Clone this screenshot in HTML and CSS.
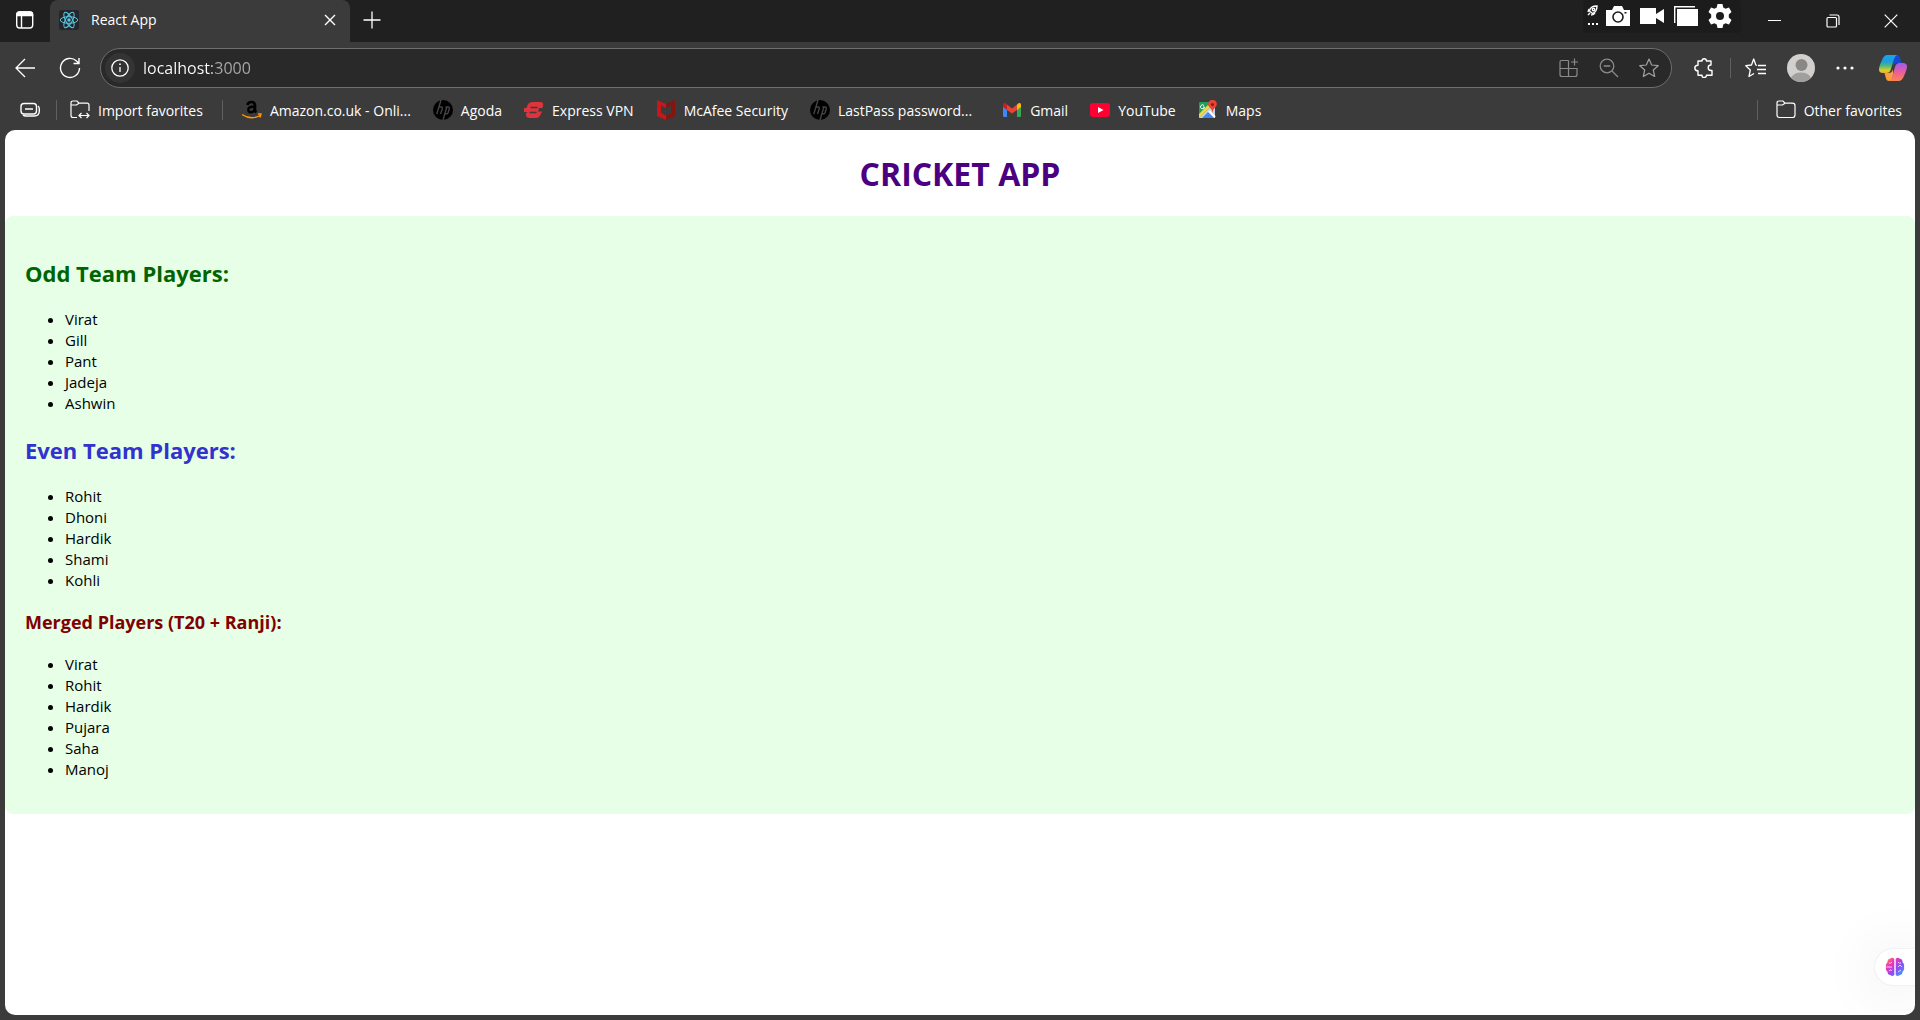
FILE: index.html
```html
<!DOCTYPE html>
<html lang="en">
<head>
<meta charset="utf-8">
<title>React App</title>
<link rel="stylesheet" href="styles.css">
</head>
<body>
<header class="browser">
  <div class="tabstrip">
    <button class="icon-btn tab-actions" aria-label="Tab actions"><svg width="20" height="20" viewBox="0 0 20 20" fill="none" stroke="#fff" stroke-width="1.4"><rect x="1.7" y="2" width="16" height="16" rx="3"/><path d="M6.5 6v12"/><path d="M2 5.5V4.5Q2 2 4.500 2h10.500Q17.500 2 17.500 4.500v1z" fill="#fff"/></svg></button>
    <div class="tab">
      <svg class="favicon" width="20" height="20" viewBox="0 0 20 20"><rect width="20" height="20" rx="2" fill="#23272b"/><g fill="none" stroke="#5bc8e4" stroke-width="1"><ellipse cx="10" cy="10" rx="8.700" ry="3.300"/><ellipse cx="10" cy="10" rx="8.700" ry="3.300" transform="rotate(60 10 10)"/><ellipse cx="10" cy="10" rx="8.700" ry="3.300" transform="rotate(120 10 10)"/></g><circle cx="10" cy="10" r="1.700" fill="#5bc8e4"/></svg>
      <span class="tab-title">React App</span>
      <button class="icon-btn tab-close" aria-label="Close tab"><svg width="12" height="12" viewBox="0 0 12 12" stroke="#fff" stroke-width="1.400"><path d="M1 1l10 10M11 1L1 11"/></svg></button>
    </div>
    <button class="icon-btn new-tab" aria-label="New tab"><svg width="20" height="20" viewBox="0 0 20 20" stroke="#fff" stroke-width="1.300"><path d="M10 1.500v17M1.500 10h17"/></svg></button>
    <div class="recorder">
      <button class="icon-btn recorder-menu" aria-label="Recorder menu"><svg width="12" height="22" viewBox="0 0 12 22"><g fill="none" stroke="#fff" stroke-width="1.400"><path d="M2.500 6Q3 1 10 1q0 6-4.500 7.500z"/><circle cx="6.500" cy="4.500" r="1.200"/><path d="M1 10l2-2M2 4L1 7M4 10q3 0 4-2"/></g><path d="M1 18h2v2H1zM5 18h2v2H5zM9 18h2v2H9z" fill="#fff"/></svg></button>
      <button class="icon-btn" aria-label="Take screenshot"><svg width="24" height="20" viewBox="0 0 24 20"><path d="M0 4h6l2-4h8l2 4h6v16H0z" fill="#fff"/><circle cx="12" cy="11" r="5" fill="none" stroke="#1c1c1c" stroke-width="1.600"/><path d="M18.500 6h2v1.500h-2z" fill="#1c1c1c"/></svg></button>
      <button class="icon-btn" aria-label="Record video"><svg width="24" height="20" viewBox="0 0 24 20" fill="#fff"><path d="M0 2h16v16H0zM16 8l8-5v14l-8-5z"/></svg></button>
      <button class="icon-btn" aria-label="Record window"><svg width="24" height="20" viewBox="0 0 24 20" fill="#fff"><path d="M3 3h21v17H3z"/><path d="M.7 17V.7H21" fill="none" stroke="#fff" stroke-width="1.400"/></svg></button>
      <button class="icon-btn" aria-label="Recorder settings"><svg width="24" height="24" viewBox="0 0 24 24"><path fill="#fff" d="M9.500 0h5l.8 3.500 2.200 1.300 3.500-1.200 2.500 4.400-2.700 2.500v3l2.700 2.500-2.500 4.400-3.500-1.200-2.200 1.300-.8 3.500h-5l-.8-3.500-2.200-1.300L3 20.400.5 16l2.700-2.500v-3L.5 8 3 3.600l3.500 1.200 2.200-1.300z"/><circle cx="12" cy="12" r="4" fill="#1c1c1c"/></svg></button>
    </div>
    <div class="window-controls">
      <button class="icon-btn" aria-label="Minimize"><svg width="14" height="14" viewBox="0 0 14 14" stroke="#fff"><path d="M0 6.500h13"/></svg></button>
      <button class="icon-btn" aria-label="Restore"><svg width="14" height="14" viewBox="0 0 14 14" fill="none" stroke="#fff" stroke-width="1.200"><rect x="1" y="3.500" width="9.500" height="9.500" rx="1"/><path d="M3.500 1h7.500q2 0 2 2v8"/></svg></button>
      <button class="icon-btn" aria-label="Close"><svg width="14" height="14" viewBox="0 0 14 14" stroke="#fff" stroke-width="1.200"><path d="M.7.700l12.600 12.600M13.300.700L.7 13.300"/></svg></button>
    </div>
  </div>

  <div class="toolbar">
    <button class="icon-btn nav-btn" aria-label="Back"><svg width="20" height="20" viewBox="0 0 20 20" fill="none" stroke="#fff" stroke-width="1.300"><path d="M20 10H1M10 1L1 10l9 9"/></svg></button>
    <button class="icon-btn nav-btn" aria-label="Refresh"><svg width="22" height="22" viewBox="0 0 22 22" fill="none" stroke="#fff" stroke-width="1.400"><path d="M20.500 11A9.500 9.500 0 1 1 17.500 4L20 6.500M20 1v5.500h-5.500"/></svg></button>
    <div class="address">
      <button class="icon-btn site-info" aria-label="Site information"><svg width="18" height="18" viewBox="0 0 18 18" fill="none" stroke="#fff" stroke-width="1.300"><circle cx="9" cy="9" r="8.200"/><path d="M9 8v5"/><path d="M9 4.500v1.600" stroke-width="1.600"/></svg></button>
      <input class="url" type="text" aria-label="Address" value="localhost:3000" spellcheck="false">
      <div class="address-actions">
        <button class="icon-btn" aria-label="Install app"><svg width="20" height="20" viewBox="0 0 20 20" fill="none" stroke="#8a8a8a" stroke-width="1.200"><path d="M9.500 2.500h-7q-1.500 0-1.500 1.500v12.500q0 2 2 2h13q2 0 2-2v-6H1M9.500 2.500v16M15.500.500v7M12 4h7"/></svg></button>
        <button class="icon-btn" aria-label="Zoom out"><svg width="20" height="20" viewBox="0 0 20 20" fill="none" stroke="#8a8a8a" stroke-width="1.300"><circle cx="8" cy="8" r="6.800"/><path d="M4.700 8h6.600M13 13l6 6"/></svg></button>
        <button class="icon-btn" aria-label="Add to favorites"><svg width="20" height="20" viewBox="0 0 20 20" fill="none" stroke="#a0a0a0" stroke-width="1.200" stroke-linejoin="round"><path d="M10 1l2.700 6 6.500.700-4.900 4.300 1.400 6.500L10 15.200l-5.700 3.300 1.400-6.500L.8 7.700l6.500-.7z"/></svg></button>
      </div>
    </div>
    <div class="toolbar-end">
      <button class="icon-btn ext" aria-label="Extensions"><svg width="20" height="20" viewBox="0 0 20 20" fill="none" stroke="#fff" stroke-width="1.400" stroke-linejoin="round"><path d="M4 3h4q0-2.300 2.200-2.300T12.500 3H17v4q-2.800 0-2.800 2.700T17 12.500h1v4.700h-5.500q0 2.300-2.300 2.300T8 17.200H4v-4.400q-3.200 0-3.200-2.800T4 7.200z"/></svg></button>
      <span class="divider"></span>
      <button class="icon-btn fav" aria-label="Favorites"><svg width="21" height="20" viewBox="0 0 21 20" fill="none" stroke="#fff" stroke-width="1.300" stroke-linejoin="round"><path d="M12 7.500L10.800 7 8.700 1 6.500 7 .8 7.700l4.500 4.300L4 18.500l5-3M13 7.500h8M12 11.500h9M13 15.500h8"/></svg></button>
      <button class="icon-btn" aria-label="Profile"><svg width="28" height="28" viewBox="0 0 28 28"><circle cx="14" cy="14" r="14" fill="#d2d0ce"/><circle cx="14.500" cy="11" r="6" fill="#8a8886"/><path d="M4 23.800Q7 18.500 14 18.500t10 5.300A14 14 0 0 1 4 23.800z" fill="#a19f9d"/></svg></button>
      <button class="icon-btn" aria-label="Settings and more"><svg width="18" height="4" viewBox="0 0 18 4" fill="#fff"><circle cx="2" cy="2" r="1.600"/><circle cx="9" cy="2" r="1.600"/><circle cx="16" cy="2" r="1.600"/></svg></button>
      <button class="icon-btn copilot" aria-label="Copilot"><svg width="28" height="28" viewBox="0 0 28 28"><defs><linearGradient id="cb" x1="0" y1="0" x2="0" y2="1"><stop offset="0" stop-color="#16a5f2"/><stop offset=".35" stop-color="#1d9be0"/><stop offset=".6" stop-color="#4fb97a"/><stop offset=".85" stop-color="#d9cf2c"/><stop offset="1" stop-color="#f3ae2b"/></linearGradient><linearGradient id="cp" x1="0" y1="0" x2="0" y2="1"><stop offset="0" stop-color="#a25af2"/><stop offset=".55" stop-color="#ee5f94"/><stop offset="1" stop-color="#fb8650"/></linearGradient></defs><path d="M14 1h4q2.500 0 3.300 3.500L22.500 9H18q-3 0-4 4z" fill="#1947cf"/><path d="M14 27h-4q-2.500 0-3.300-3.500L5.500 19H10q3 0 4-4z" fill="#f9a03c"/><path d="M8.500 1H18q-2.300 1-3.300 5l-2.900 9.500Q10.800 19 7.500 19H4Q0 19 0 15.500q0-3 3-9.500Q5 1 8.500 1z" fill="url(#cb)"/><path d="M19.500 27H10q2.300-1 3.300-5l2.900-9.500Q17.200 9 20.500 9H24q4 0 4 3.500 0 3-3 9.500-2 5-5.500 5z" fill="url(#cp)"/></svg></button>
    </div>
  </div>

  <nav class="bookmarks" aria-label="Favorites bar">
    <button class="icon-btn collapse" aria-label="Workspaces"><svg width="20" height="16" viewBox="0 0 20 16" fill="none" stroke="#fff" stroke-width="1.400"><rect x="1" y="1.500" width="15.500" height="10.500" rx="3"/><path d="M5 7h8M18 4q1.300 1 1.300 3v2q0 5-5 5H6q-2 0-3-1"/></svg></button>
    <span class="divider"></span>
    <button class="bookmark import"><svg width="20" height="20" viewBox="0 0 20 20" fill="none" stroke="#fff" stroke-width="1.200"><path d="M7 17.500H3q-2 0-2-2V3q0-2 2-2h4l2 2.200h8q2 0 2 2V11M1 5h5.500L9 3.200M9 15.500h10M11.500 13L9 15.500l2.500 2.500M16.500 13l2.500 2.500-2.500 2.500"/></svg>Import favorites</button>
    <span class="divider"></span>
    <div class="bookmark-links">
      <a class="bookmark" href="#"><svg width="20" height="20" viewBox="0 0 20 20" fill="none"><path d="M5.500 5q.5-3 4-3 3.500 0 3.500 3.500V10q0 1.500 1.300 2.500" stroke="#000" stroke-width="2.600"/><path d="M12.800 6.500q-6.500 0-6.500 3.200 0 2.500 2.500 2.500 4 0 4-4.700" stroke="#000" stroke-width="2.400"/><path d="M0 14.500q9 6 18 1M16 14h3q0 2-1.300 3.500" stroke="#f90" stroke-width="1.300"/></svg>Amazon.co.uk - Onli...</a>
      <a class="bookmark" href="#"><svg width="20" height="20" viewBox="0 0 20 20"><circle cx="10" cy="10" r="10" fill="#000"/><path d="M8 0L3.800 14M6 7h2.200q1.500 0 1 2L7.500 14M14 6.500L10 20M12.500 7h2.700q1.500 0 1 2l-1 3.500q-.5 1.500-2.700 1.500" fill="none" stroke="#444" stroke-width="1.400"/></svg>Agoda</a>
      <a class="bookmark" href="#"><svg width="20" height="20" viewBox="0 0 20 20"><path d="M8 2h8q4 0 3 4l-.6 2H2.500Q4 2 8 2zM0 8h14.500l-1 4H0zM4 12h13.500q-1.500 6-5.500 6H6q-5 0-4-5z" fill="#e0343d"/><path d="M7 7.500h7.500l-1 4.500H18" fill="none" stroke="#e0343d"/><path d="M6.500 7.500h7M5.500 12.500h7" stroke="#3b3b3b" stroke-width="1.500"/></svg>Express VPN</a>
      <a class="bookmark" href="#"><svg width="20" height="20" viewBox="0 0 20 20"><path d="M1 0l9 4v4L5 5.500v7.500l5 2.500V20l-9-4z" fill="#c8161d"/><path d="M19 0l-9 4v4l5-2.500v7.500l-5 2.500V20l9-4z" fill="#86150f"/></svg>McAfee Security</a>
      <a class="bookmark" href="#"><svg width="20" height="20" viewBox="0 0 20 20"><circle cx="10" cy="10" r="10" fill="#000"/><path d="M8 0L3.800 14M6 7h2.200q1.500 0 1 2L7.500 14M14 6.500L10 20M12.500 7h2.700q1.500 0 1 2l-1 3.500q-.5 1.500-2.700 1.500" fill="none" stroke="#444" stroke-width="1.400"/></svg>LastPass password...</a>
      <a class="bookmark google" href="#"><svg width="20" height="20" viewBox="0 0 20 20"><path d="M1 6l4 3v8H2q-1 0-1-1z" fill="#4285f4"/><path d="M15 9l4-3v10q0 1-1 1h-3z" fill="#34a853"/><path d="M1 7V5q0-3 3-1.500l1 1V10z" fill="#c5221f"/><path d="M5 4.500l5 4 5-4V10l-5 3.500L5 10z" fill="#ea4335"/><path d="M15 4.500l1-1q3-1.500 3 1.500v2l-4 3z" fill="#fbbc04"/></svg>Gmail</a>
      <a class="bookmark" href="#"><svg width="20" height="20" viewBox="0 0 20 20"><rect y="3" width="20" height="14" rx="3" fill="#ff0033"/><path d="M8 7l5.500 3L8 13z" fill="#fff"/></svg>YouTube</a>
      <a class="bookmark" href="#"><svg width="20" height="20" viewBox="0 0 20 20"><rect x="1" y="2" width="16" height="16" rx="1" fill="#1e9e5a"/><path d="M1 18L17 2v16z" fill="#c9d2dc"/><path d="M4 18l6-6 6 6z" fill="#4285f4"/><path d="M1 14L10 5l2 2L1 18z" fill="#fdd23b"/><path d="M11 11l6 6" stroke="#fff" stroke-width="2"/><path d="M6 5.500A2 2 0 1 0 6.500 7H5" stroke="#fff" fill="none"/><path d="M14.500 13q-.5-4-3-6a4.200 4.200 0 1 1 6 0q-2.500 2-3 6z" fill="#ea4335"/><circle cx="14.500" cy="4.500" r="1.500" fill="#8c1a13"/></svg>Maps</a>
    </div>
    <span class="divider"></span>
    <button class="bookmark other"><svg width="20" height="20" viewBox="0 0 20 20" fill="none" stroke="#fff" stroke-width="1.200"><path d="M1 5V3q0-2 2-2h4l2 2.200h7.500q2.500 0 2.500 2.300v9.500q0 2.500-2.500 2.500h-13Q1 17.500 1 15V5h5.500L9 3.200"/></svg>Other favorites</button>
  </nav>
</header>

<main class="page">
  <h1 class="app-title">CRICKET APP</h1>
  <section class="teams">
    <h2 class="odd">Odd Team Players:</h2>
    <ul class="players">
      <li>Virat</li>
      <li>Gill</li>
      <li>Pant</li>
      <li>Jadeja</li>
      <li>Ashwin</li>
    </ul>
    <h2 class="even">Even Team Players:</h2>
    <ul class="players">
      <li>Rohit</li>
      <li>Dhoni</li>
      <li>Hardik</li>
      <li>Shami</li>
      <li>Kohli</li>
    </ul>
    <h3 class="merged">Merged Players (T20 + Ranji):</h3>
    <ul class="players">
      <li>Virat</li>
      <li>Rohit</li>
      <li>Hardik</li>
      <li>Pujara</li>
      <li>Saha</li>
      <li>Manoj</li>
    </ul>
  </section>
  <button class="assistant" aria-label="Open assistant"><svg width="20" height="20" viewBox="0 0 20 20"><defs><linearGradient id="br" x1="0" y1="0" x2="1" y2="1"><stop offset="0" stop-color="#ff9a2b"/><stop offset=".3" stop-color="#ee35c0"/><stop offset=".6" stop-color="#8a4df5"/><stop offset="1" stop-color="#28b4f5"/></linearGradient></defs><path d="M9.300 2v16q-2 2-4 0-2.500 0-3-3.500Q.300 13 1 10 .300 7 2.300 5.500 2.500 2 5 1.700 7.500-.2 9.300 2zM10.700 2v16q2 2 4 0 2.500 0 3-3.500 2-1.500 1.300-4.500.7-3-1.300-4.500-.200-3.500-2.700-3.800-2.500-1.900-4.300.300z" fill="url(#br)"/><path d="M4 6q2 1 3-1M1.500 10H7M4 14q1-2 3-.5M13 5q1 2 3 1M13 10l2-2 2 2M13 15l3-2" fill="none" stroke="#fff" stroke-opacity=".75"/></svg></button>
</main>
</body>
</html>
```

FILE: styles.css
```css
* { box-sizing: border-box; }

body {
  margin: 0;
  min-height: 100vh;
  display: flex;
  flex-direction: column;
  background: #3b3b3b;
  font-family: "Open Sans", "Noto Sans", sans-serif;
  font-size: 14px;
  color: #000;
}

svg { display: block; flex: none; }

button {
  border: 0;
  padding: 0;
  background: none;
  color: inherit;
  font: inherit;
}

.icon-btn {
  display: flex;
  align-items: center;
  justify-content: center;
  flex: none;
}

.browser { color: #fff; }

.divider {
  width: 1px;
  height: 20px;
  flex: none;
  background: #606060;
}

/* Tab strip */
.tabstrip {
  display: flex;
  height: 42px;
  background: #202020;
}

.tab-actions { width: 50px; height: 40px; }

.tab {
  display: flex;
  align-items: center;
  width: 300px;
  padding: 0 14px 2px 9px;
  border-radius: 8px 8px 0 0;
  background: #3b3b3b;
}

.tab-title { flex: 1; padding: 0 0 2px 12px; }

.new-tab { width: 44px; height: 40px; }

.recorder {
  display: flex;
  align-items: center;
  gap: 10px;
  width: 158px;
  height: 33px;
  margin-left: auto;
  padding: 0 0 1px 4px;
  border-radius: 4px;
  background: #1c1c1c;
}

.recorder-menu { margin-right: -3px; }

.window-controls { display: flex; margin-left: 5px; }

.window-controls .icon-btn { width: 58px; height: 42px; }

/* Toolbar */
.toolbar {
  display: flex;
  align-items: center;
  height: 51px;
  padding-right: 13px;
}

.nav-btn { width: 50px; height: 40px; }

.nav-btn + .nav-btn { width: 40px; margin-right: 10px; }

.address {
  display: flex;
  flex: 1;
  align-items: center;
  height: 40px;
  padding: 0 12px 0 4px;
  border: 1px solid #6e6e6e;
  border-radius: 20px;
  background: #292929;
}

.site-info {
  width: 30px;
  height: 30px;
  border-radius: 50%;
  background: #343434;
}

.url {
  flex: 1;
  min-width: 0;
  margin-left: 8px;
  padding: 0;
  border: 0;
  outline: 0;
  font: inherit;
  font-size: 16px;
  color: transparent;
  background: linear-gradient(to right, #fff 69px, #ababab 69px);
  background-clip: text;
  -webkit-background-clip: text;
}

.address-actions { display: flex; gap: 20px; }

.toolbar-end {
  display: flex;
  align-items: center;
  gap: 21px;
  margin-left: 22px;
}

.ext { margin-right: -5px; }

.fav { margin-left: -7px; }

.copilot { margin-left: 4px; }

/* Favorites bar */
.bookmarks {
  display: flex;
  align-items: center;
  height: 37px;
  padding: 0 18px 3px 20px;
}

.bookmark {
  display: flex;
  align-items: center;
  gap: 8px;
  color: #fff;
  text-decoration: none;
  white-space: nowrap;
}

.collapse { margin-right: 16px; }

.import { margin: 0 19px 0 13px; }

.bookmark-links {
  display: flex;
  flex: 1;
  gap: 22px;
  margin-left: 19px;
}

.google { margin-left: 8px; }

.other { margin-left: 18px; }

/* Page */
.page {
  position: relative;
  flex: 1;
  margin: 0 5px 5px;
  border-radius: 10px;
  background: #fff;
  overflow: hidden;
  font-size: 15px;
  line-height: 21px;
}

.app-title {
  margin: 22px 0 21px;
  font-size: 32px;
  line-height: 43px;
  text-align: center;
  color: #4b0082;
}

.teams {
  padding: 21px 20px 18px;
  border-radius: 8px;
  background: #e6ffe6;
}

.teams h2 {
  margin: 20px 0;
  font-size: 22px;
  line-height: 32px;
}

.teams h3 {
  margin: 19px 0;
  font-size: 18px;
  line-height: 25px;
}

.odd { color: #006400; }

.even { color: #3232cd; }

.merged { color: #800000; }

.players { margin: 16px 0; padding-left: 40px; }

.assistant {
  position: absolute;
  right: 0;
  bottom: 30px;
  width: 40px;
  height: 36px;
  padding-left: 10px;
  border-radius: 18px 0 0 18px;
  background: #fff;
  box-shadow: 0 4px 60px rgba(0, 0, 0, 0.12), 0 0 2px rgba(0, 0, 0, 0.12);
}
```
